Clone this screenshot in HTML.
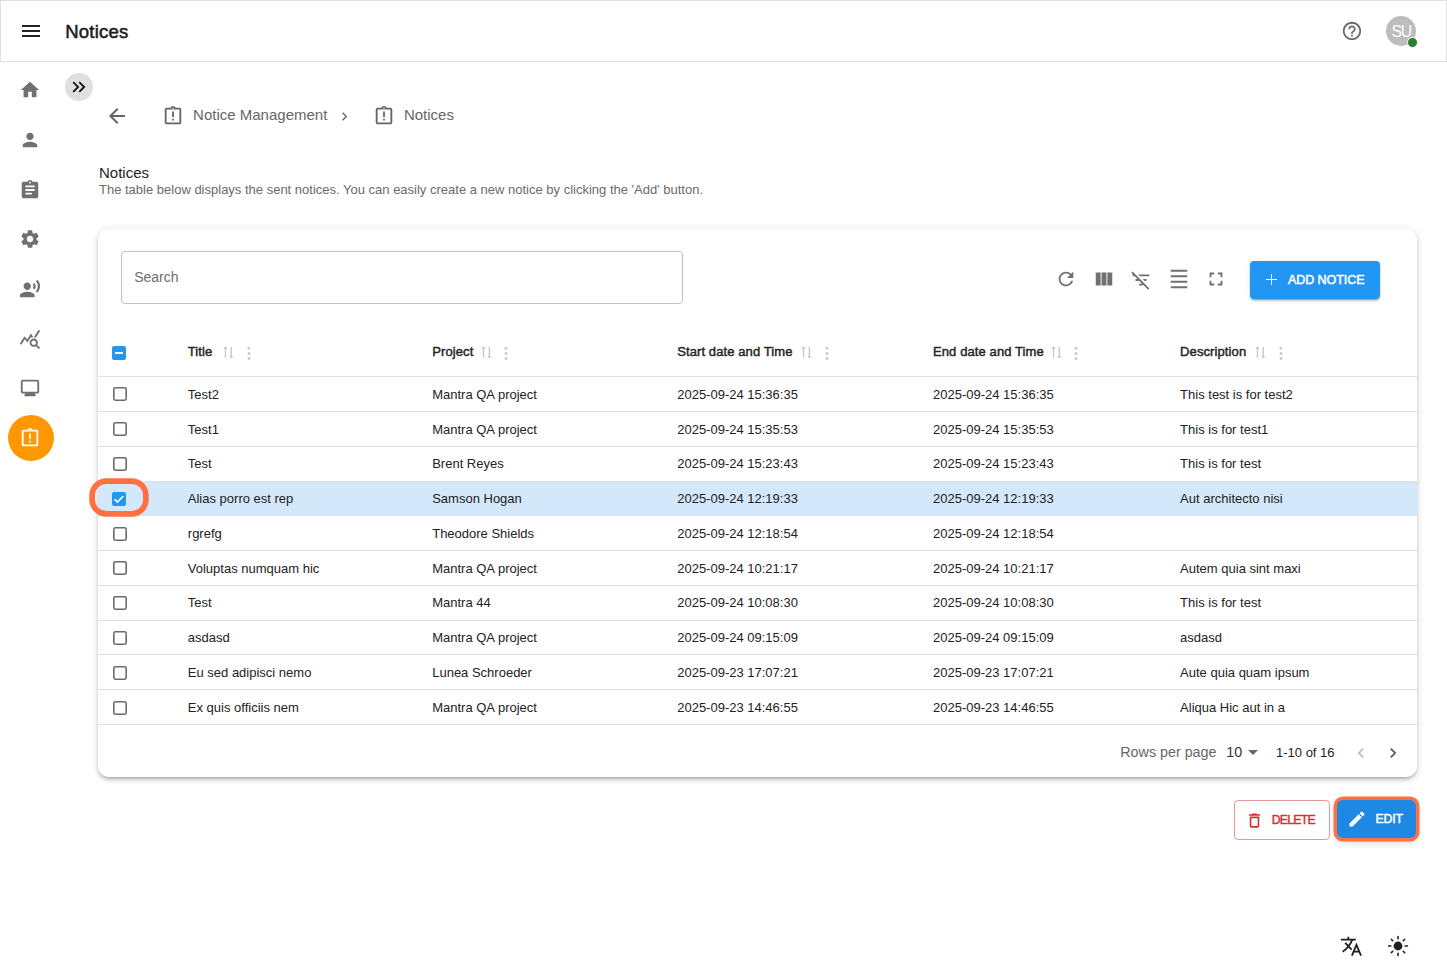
<!DOCTYPE html>
<html><head><meta charset="utf-8"><title>Notices</title>
<style>
html,body{margin:0;padding:0;background:#fff;width:1447px;height:970px;overflow:hidden;position:relative;font-family:"Liberation Sans", sans-serif}
.t{position:absolute;white-space:nowrap;line-height:1}
svg{display:block}
</style></head><body>
<div style="position:absolute;left:0.00px;top:0.00px;width:1447.00px;height:62.00px;box-sizing:border-box;border:1px solid #e0e0e0;background:#fff"></div>
<svg style="position:absolute;left:19.40px;top:19.05px;" width="24.00" height="24.00" viewBox="0 0 24 24"><path fill="#222" d="M3 18h18v-2H3zm0-5h18v-2H3zm0-7v2h18V6z"/></svg>
<div class="t" style="left:65.30px;top:22.74px;font-size:18.5px;font-weight:400;color:#1c1c1c;-webkit-text-stroke:0.55px #1c1c1c;letter-spacing:0.2px">Notices</div>
<svg style="position:absolute;left:1341.22px;top:20.22px;" width="21.96" height="21.96" viewBox="0 0 24 24"><path fill="#6a6a6a" d="M11 18h2v-2h-2zm1-16C6.48 2 2 6.48 2 12s4.48 10 10 10 10-4.48 10-10S17.52 2 12 2m0 18c-4.41 0-8-3.59-8-8s3.59-8 8-8 8 3.59 8 8-3.59 8-8 8m0-14c-2.21 0-4 1.79-4 4h2c0-1.1.9-2 2-2s2 .9 2 2c0 2-3 1.75-3 5h2c0-2.25 3-2.5 3-5 0-2.21-1.79-4-4-4"/></svg>
<div style="position:absolute;left:1386.00px;top:16.00px;width:30.00px;height:30.00px;border-radius:50%;background:#bdbdbd"></div>
<div class="t" style="left:1391.60px;top:24.03px;font-size:15.8px;font-weight:400;color:#fff;letter-spacing:-1.4px">SU</div>
<div style="position:absolute;left:1406.60px;top:36.70px;width:11.00px;height:11.00px;border-radius:50%;background:#2e7d32;box-sizing:border-box;border:1.5px solid #fff"></div>
<svg style="position:absolute;left:19.15px;top:79.21px;" width="22.00" height="22.00" viewBox="0 0 24 24"><path fill="#707070" d="M10 20v-6h4v6h5v-8h3L12 3 2 12h3v8z"/></svg>
<svg style="position:absolute;left:19.30px;top:129.25px;" width="22.00" height="22.00" viewBox="0 0 24 24"><path fill="#707070" d="M12 12c2.21 0 4-1.79 4-4s-1.79-4-4-4-4 1.79-4 4 1.79 4 4 4m0 2c-2.67 0-8 1.34-8 4v2h16v-2c0-2.66-5.33-4-8-4"/></svg>
<svg style="position:absolute;left:19.20px;top:179.17px;" width="22.00" height="22.00" viewBox="0 0 24 24"><path fill="#707070" d="M19 3h-4.18C14.4 1.84 13.3 1 12 1s-2.4.84-2.82 2H5c-1.1 0-2 .9-2 2v14c0 1.1.9 2 2 2h14c1.1 0 2-.9 2-2V5c0-1.1-.9-2-2-2m-7 0c.55 0 1 .45 1 1s-.45 1-1 1-1-.45-1-1 .45-1 1-1m2 14H7v-2h7zm3-4H7v-2h10zm0-4H7V7h10z"/></svg>
<svg style="position:absolute;left:19.30px;top:228.05px;" width="22.00" height="22.00" viewBox="0 0 24 24"><path fill="#707070" d="M19.14 12.94c.04-.3.06-.61.06-.94 0-.32-.02-.64-.07-.94l2.03-1.58c.18-.14.23-.41.12-.61l-1.92-3.32c-.12-.22-.37-.29-.59-.22l-2.39.96c-.5-.38-1.03-.7-1.62-.94l-.36-2.54c-.04-.24-.24-.41-.48-.41h-3.84c-.24 0-.43.17-.47.41l-.36 2.54c-.59.24-1.13.57-1.62.94l-2.39-.96c-.22-.08-.47 0-.59.22L2.74 8.87c-.12.21-.08.47.12.61l2.03 1.58c-.05.3-.09.63-.09.94s.02.64.07.94l-2.03 1.58c-.18.14-.23.41-.12.61l1.92 3.32c.12.22.37.29.59.22l2.39-.96c.5.38 1.03.7 1.62.94l.36 2.54c.05.24.24.41.48.41h3.84c.24 0 .44-.17.47-.41l.36-2.54c.59-.24 1.13-.56 1.62-.94l2.39.96c.22.08.47 0 .59-.22l1.92-3.32c.12-.22.07-.47-.12-.61zM12 15.6c-1.98 0-3.6-1.62-3.6-3.6s1.62-3.6 3.6-3.6 3.6 1.62 3.6 3.6-1.62 3.6-3.6 3.6"/></svg>
<svg style="position:absolute;left:19.25px;top:278.46px;" width="22.00" height="22.00" viewBox="0 0 24 24"><path fill="#707070" d="M9 13c2.21 0 4-1.79 4-4s-1.79-4-4-4-4 1.79-4 4 1.79 4 4 4m0 2c-2.67 0-8 1.34-8 4v2h16v-2c0-2.66-5.33-4-8-4m6.08-7.95c.84 1.18.84 2.71 0 3.89l1.68 1.69c2.02-2.02 2.02-5.07 0-7.27zM20.07 2l-1.63 1.63c2.77 3.02 2.77 7.56 0 10.74L20.07 16c3.9-3.89 3.91-9.95 0-14"/></svg>
<svg style="position:absolute;left:19.30px;top:328.04px;" width="22.00" height="22.00" viewBox="0 0 24 24"><path fill="#707070" d="M19.88 18.47c.44-.7.7-1.51.7-2.39 0-2.49-2.01-4.5-4.5-4.5s-4.5 2.01-4.5 4.5 2.01 4.5 4.49 4.5c.88 0 1.7-.26 2.39-.7L21.58 23 23 21.58zm-3.8.11c-1.38 0-2.5-1.12-2.5-2.5s1.12-2.5 2.5-2.5 2.5 1.12 2.5 2.5-1.12 2.5-2.5 2.5m-.36-8.5c-.74.02-1.45.18-2.1.45l-.55-.83-3.8 6.18-3.01-3.52-3.63 5.81L1 17l5-8 3 3.5L13 6zm2.59.5c-.64-.28-1.33-.45-2.05-.49L21.38 2 23 3.18z"/></svg>
<svg style="position:absolute;left:19.28px;top:377.15px;" width="22.00" height="22.00" viewBox="0 0 24 24"><path fill="#707070" d="M20 3H4c-1.1 0-2 .9-2 2v11c0 1.1.9 2 2 2h3l-1 1v2h12v-2l-1-1h3c1.1 0 2-.9 2-2V5c0-1.1-.9-2-2-2m0 13H4V5h16z"/></svg>
<div style="position:absolute;left:7.70px;top:414.80px;width:46.00px;height:46.00px;border-radius:50%;background:#ff9800"></div>
<svg style="position:absolute;left:19.40px;top:427.27px;" width="22.00" height="22.00" viewBox="0 0 24 24"><path fill="#fff" d="M11 15h2v2h-2zm0-8h2v6h-2zm8-4h-4.18C14.4 1.84 13.3 1 12 1s-2.4.84-2.82 2H5c-1.1 0-2 .9-2 2v14c0 1.1.9 2 2 2h14c1.1 0 2-.9 2-2V5c0-1.1-.9-2-2-2m-7-.25c.41 0 .75.34.75.75s-.34.75-.75.75-.75-.34-.75-.75.34-.75.75-.75M19 19H5V5h14z"/></svg>
<div style="position:absolute;left:65.20px;top:73.10px;width:27.70px;height:27.80px;border-radius:50%;background:#e0e0e0"></div>
<svg style="position:absolute;left:67.70px;top:75.50px;" width="22.00" height="22.00" viewBox="0 0 24 24"><path fill="#111" d="M6.41 6 5 7.41 9.58 12 5 16.59 6.41 18l6-6zM13 6l-1.41 1.41L16.17 12l-4.58 4.59L13 18l6-6z"/></svg>
<svg style="position:absolute;left:105.40px;top:104.30px;" width="24.00" height="24.00" viewBox="0 0 24 24"><path fill="#666" d="M20 11H7.83l5.59-5.59L12 4l-8 8 8 8 1.41-1.41L7.83 13H20z"/></svg>
<svg style="position:absolute;left:162.00px;top:105.12px;" width="22.00" height="22.00" viewBox="0 0 24 24"><path fill="#666" d="M11 15h2v2h-2zm0-8h2v6h-2zm8-4h-4.18C14.4 1.84 13.3 1 12 1s-2.4.84-2.82 2H5c-1.1 0-2 .9-2 2v14c0 1.1.9 2 2 2h14c1.1 0 2-.9 2-2V5c0-1.1-.9-2-2-2m-7-.25c.41 0 .75.34.75.75s-.34.75-.75.75-.75-.34-.75-.75.34-.75.75-.75M19 19H5V5h14z"/></svg>
<div class="t" style="left:193.10px;top:107.30px;font-size:15px;font-weight:400;color:#666;">Notice Management</div>
<svg style="position:absolute;left:336.49px;top:107.80px;" width="17.00" height="17.00" viewBox="0 0 24 24"><path fill="#666" d="M10 6 8.59 7.41 13.17 12l-4.58 4.59L10 18l6-6z"/></svg>
<svg style="position:absolute;left:373.20px;top:105.12px;" width="22.00" height="22.00" viewBox="0 0 24 24"><path fill="#666" d="M11 15h2v2h-2zm0-8h2v6h-2zm8-4h-4.18C14.4 1.84 13.3 1 12 1s-2.4.84-2.82 2H5c-1.1 0-2 .9-2 2v14c0 1.1.9 2 2 2h14c1.1 0 2-.9 2-2V5c0-1.1-.9-2-2-2m-7-.25c.41 0 .75.34.75.75s-.34.75-.75.75-.75-.34-.75-.75.34-.75.75-.75M19 19H5V5h14z"/></svg>
<div class="t" style="left:403.90px;top:107.30px;font-size:15px;font-weight:400;color:#666;">Notices</div>
<div class="t" style="left:99.00px;top:164.70px;font-size:15px;font-weight:400;color:#1f1f1f;">Notices</div>
<div class="t" style="left:99.00px;top:182.90px;font-size:13px;font-weight:400;color:#6b6b6b;">The table below displays the sent notices. You can easily create a new notice by clicking the 'Add' button.</div>
<div style="position:absolute;left:97.70px;top:228.60px;width:1319.50px;height:548.30px;border-radius:11px;background:#fff;box-shadow:0px 3px 3px -2px rgba(0,0,0,0.2),0px 3px 4px 0px rgba(0,0,0,0.14),0px 1px 8px 0px rgba(0,0,0,0.12)"></div>
<div style="position:absolute;left:121.30px;top:251.30px;width:561.70px;height:52.30px;box-sizing:border-box;border:1px solid #c2c2c2;border-radius:4px"></div>
<div class="t" style="left:134.20px;top:270.15px;font-size:14px;font-weight:400;color:#6e6e6e;">Search</div>
<svg style="position:absolute;left:1055.30px;top:268.00px;" width="22.00" height="22.00" viewBox="0 0 24 24"><path fill="#717171" d="M17.65 6.35C16.2 4.9 14.21 4 12 4c-4.42 0-7.99 3.58-7.99 8s3.57 8 7.99 8c3.73 0 6.84-2.55 7.73-6h-2.08c-.82 2.33-3.04 4-5.65 4-3.31 0-6-2.69-6-6s2.69-6 6-6c1.66 0 3.14.69 4.22 1.78L13 11h7V4z"/></svg>
<svg style="position:absolute;left:1093.25px;top:268.25px;" width="22.00" height="22.00" viewBox="0 0 24 24"><path fill="#717171" d="M14.67 5v14H9.33V5zm1 14H21V5h-5.33zm-7.34 0V5H3v14z"/></svg>
<svg style="position:absolute;left:1130.36px;top:268.70px;" width="22.00" height="22.00" viewBox="0 0 24 24"><path fill="#717171" d="M10.83 8H21V6H8.83zm5 5H18v-2h-4.17zM14 16.83V18h-4v-2h3.17l-3-3H6v-2h2.17l-3-3H3V6h.17L1.39 4.22 2.8 2.81l18.38 18.38-1.41 1.41z"/></svg>
<svg style="position:absolute;left:1168.25px;top:268.35px;" width="22.00" height="22.00" viewBox="0 0 24 24"><path fill="#717171" d="M3 2h18v2H3zm0 18h18v2H3zm0-6h18v2H3zm0-6h18v2H3z"/></svg>
<svg style="position:absolute;left:1205.40px;top:268.05px;" width="22.00" height="22.00" viewBox="0 0 24 24"><path fill="#717171" d="M7 14H5v5h5v-2H7zm-2-4h2V7h3V5H5zm12 7h-3v2h5v-5h-2zM14 5v2h3v3h2V5z"/></svg>
<div style="position:absolute;left:1250.10px;top:261.20px;width:129.70px;height:37.60px;border-radius:4px;background:#2196f3;box-shadow:0 3px 1px -2px rgba(0,0,0,0.2),0 2px 2px 0 rgba(0,0,0,0.14),0 1px 5px 0 rgba(0,0,0,0.12)"></div>
<div style="position:absolute;left:1265.80px;top:278.80px;width:11.20px;height:1.60px;background:#fff"></div>
<div style="position:absolute;left:1270.60px;top:274.00px;width:1.60px;height:11.20px;background:#fff"></div>
<div class="t" style="left:1287.90px;top:273.82px;font-size:12.5px;font-weight:400;color:#fff;-webkit-text-stroke:0.5px #fff;letter-spacing:-0.05px">ADD NOTICE</div>
<div style="position:absolute;left:112.20px;top:346.10px;width:14.10px;height:14.10px;border-radius:2px;background:#2196f3"></div>
<div style="position:absolute;left:115.30px;top:352.30px;width:8.00px;height:2.00px;background:#fff"></div>
<div class="t" style="left:187.80px;top:345.10px;font-size:13px;font-weight:400;color:#262626;-webkit-text-stroke:0.45px #262626;letter-spacing:0.1px">Title</div>
<svg style="position:absolute;left:221.80px;top:345px" width="13" height="15" viewBox="0 0 13 15"><g fill="#cacaca"><rect x="2.8" y="2.6" width="1.4" height="10.1"/><path d="M1.2 4.0L3.5 1.3 5.8 4.0z"/><rect x="8.6" y="2.0" width="1.4" height="10.3"/><path d="M7 11.1L9.3 13.6 11.6 11.1z"/></g></svg>
<svg style="position:absolute;left:246.20px;top:345px" width="6" height="16" viewBox="0 0 6 16"><g fill="#cccccc"><circle cx="3" cy="3.2" r="1.5"/><circle cx="3" cy="8.4" r="1.5"/><circle cx="3" cy="13.4" r="1.5"/></g></svg>
<div class="t" style="left:432.20px;top:345.10px;font-size:13px;font-weight:400;color:#262626;-webkit-text-stroke:0.45px #262626;letter-spacing:0.1px">Project</div>
<svg style="position:absolute;left:479.90px;top:345px" width="13" height="15" viewBox="0 0 13 15"><g fill="#cacaca"><rect x="2.8" y="2.6" width="1.4" height="10.1"/><path d="M1.2 4.0L3.5 1.3 5.8 4.0z"/><rect x="8.6" y="2.0" width="1.4" height="10.3"/><path d="M7 11.1L9.3 13.6 11.6 11.1z"/></g></svg>
<svg style="position:absolute;left:503.00px;top:345px" width="6" height="16" viewBox="0 0 6 16"><g fill="#cccccc"><circle cx="3" cy="3.2" r="1.5"/><circle cx="3" cy="8.4" r="1.5"/><circle cx="3" cy="13.4" r="1.5"/></g></svg>
<div class="t" style="left:677.20px;top:345.10px;font-size:13px;font-weight:400;color:#262626;-webkit-text-stroke:0.45px #262626;letter-spacing:0.1px">Start date and Time</div>
<svg style="position:absolute;left:800.30px;top:345px" width="13" height="15" viewBox="0 0 13 15"><g fill="#cacaca"><rect x="2.8" y="2.6" width="1.4" height="10.1"/><path d="M1.2 4.0L3.5 1.3 5.8 4.0z"/><rect x="8.6" y="2.0" width="1.4" height="10.3"/><path d="M7 11.1L9.3 13.6 11.6 11.1z"/></g></svg>
<svg style="position:absolute;left:824.00px;top:345px" width="6" height="16" viewBox="0 0 6 16"><g fill="#cccccc"><circle cx="3" cy="3.2" r="1.5"/><circle cx="3" cy="8.4" r="1.5"/><circle cx="3" cy="13.4" r="1.5"/></g></svg>
<div class="t" style="left:933.00px;top:345.10px;font-size:13px;font-weight:400;color:#262626;-webkit-text-stroke:0.45px #262626;letter-spacing:0.1px">End date and Time</div>
<svg style="position:absolute;left:1049.80px;top:345px" width="13" height="15" viewBox="0 0 13 15"><g fill="#cacaca"><rect x="2.8" y="2.6" width="1.4" height="10.1"/><path d="M1.2 4.0L3.5 1.3 5.8 4.0z"/><rect x="8.6" y="2.0" width="1.4" height="10.3"/><path d="M7 11.1L9.3 13.6 11.6 11.1z"/></g></svg>
<svg style="position:absolute;left:1073.20px;top:345px" width="6" height="16" viewBox="0 0 6 16"><g fill="#cccccc"><circle cx="3" cy="3.2" r="1.5"/><circle cx="3" cy="8.4" r="1.5"/><circle cx="3" cy="13.4" r="1.5"/></g></svg>
<div class="t" style="left:1180.10px;top:345.10px;font-size:13px;font-weight:400;color:#262626;-webkit-text-stroke:0.45px #262626;letter-spacing:0.1px">Description</div>
<svg style="position:absolute;left:1254.10px;top:345px" width="13" height="15" viewBox="0 0 13 15"><g fill="#cacaca"><rect x="2.8" y="2.6" width="1.4" height="10.1"/><path d="M1.2 4.0L3.5 1.3 5.8 4.0z"/><rect x="8.6" y="2.0" width="1.4" height="10.3"/><path d="M7 11.1L9.3 13.6 11.6 11.1z"/></g></svg>
<svg style="position:absolute;left:1277.90px;top:345px" width="6" height="16" viewBox="0 0 6 16"><g fill="#cccccc"><circle cx="3" cy="3.2" r="1.5"/><circle cx="3" cy="8.4" r="1.5"/><circle cx="3" cy="13.4" r="1.5"/></g></svg>
<div style="position:absolute;left:97.70px;top:376.00px;width:1319.50px;height:1.00px;background:#e0e0e0"></div>
<div style="position:absolute;left:97.70px;top:411.00px;width:1319.50px;height:1.00px;background:#e0e0e0"></div>
<svg style="position:absolute;left:111.5px;top:386.30px" width="16" height="16" viewBox="0 0 16 16"><rect x="1.8" y="1.8" width="12.4" height="12.4" rx="1.6" fill="none" stroke="#6b6b6b" stroke-width="1.6"/></svg>
<div class="t" style="left:187.80px;top:388.10px;font-size:13px;font-weight:400;color:#222;">Test2</div>
<div class="t" style="left:432.20px;top:388.10px;font-size:13px;font-weight:400;color:#222;">Mantra QA project</div>
<div class="t" style="left:677.20px;top:388.10px;font-size:13px;font-weight:400;color:#222;">2025-09-24 15:36:35</div>
<div class="t" style="left:933.00px;top:388.10px;font-size:13px;font-weight:400;color:#222;">2025-09-24 15:36:35</div>
<div class="t" style="left:1180.10px;top:388.10px;font-size:13px;font-weight:400;color:#222;">This test is for test2</div>
<div style="position:absolute;left:97.70px;top:446.00px;width:1319.50px;height:1.00px;background:#e0e0e0"></div>
<svg style="position:absolute;left:111.5px;top:421.10px" width="16" height="16" viewBox="0 0 16 16"><rect x="1.8" y="1.8" width="12.4" height="12.4" rx="1.6" fill="none" stroke="#6b6b6b" stroke-width="1.6"/></svg>
<div class="t" style="left:187.80px;top:423.10px;font-size:13px;font-weight:400;color:#222;">Test1</div>
<div class="t" style="left:432.20px;top:423.10px;font-size:13px;font-weight:400;color:#222;">Mantra QA project</div>
<div class="t" style="left:677.20px;top:423.10px;font-size:13px;font-weight:400;color:#222;">2025-09-24 15:35:53</div>
<div class="t" style="left:933.00px;top:423.10px;font-size:13px;font-weight:400;color:#222;">2025-09-24 15:35:53</div>
<div class="t" style="left:1180.10px;top:423.10px;font-size:13px;font-weight:400;color:#222;">This is for test1</div>
<div style="position:absolute;left:97.70px;top:481.00px;width:1319.50px;height:1.00px;background:#e0e0e0"></div>
<svg style="position:absolute;left:111.5px;top:455.90px" width="16" height="16" viewBox="0 0 16 16"><rect x="1.8" y="1.8" width="12.4" height="12.4" rx="1.6" fill="none" stroke="#6b6b6b" stroke-width="1.6"/></svg>
<div class="t" style="left:187.80px;top:457.10px;font-size:13px;font-weight:400;color:#222;">Test</div>
<div class="t" style="left:432.20px;top:457.10px;font-size:13px;font-weight:400;color:#222;">Brent Reyes</div>
<div class="t" style="left:677.20px;top:457.10px;font-size:13px;font-weight:400;color:#222;">2025-09-24 15:23:43</div>
<div class="t" style="left:933.00px;top:457.10px;font-size:13px;font-weight:400;color:#222;">2025-09-24 15:23:43</div>
<div class="t" style="left:1180.10px;top:457.10px;font-size:13px;font-weight:400;color:#222;">This is for test</div>
<div style="position:absolute;left:97.70px;top:482.00px;width:1319.50px;height:33.00px;background:#d3e8fb"></div>
<div style="position:absolute;left:97.70px;top:515.00px;width:1319.50px;height:1.00px;background:#e0e0e0"></div>
<div style="position:absolute;left:112.20px;top:491.70px;width:14.00px;height:14.00px;border-radius:2px;background:#2196f3"></div>
<svg style="position:absolute;left:112.2px;top:491.70px" width="14" height="14" viewBox="0 0 14 14"><path fill="none" stroke="#fff" stroke-width="1.6" d="M2.6 7.2l2.9 2.8 5.8-6"/></svg>
<div class="t" style="left:187.80px;top:492.10px;font-size:13px;font-weight:400;color:#222;">Alias porro est rep</div>
<div class="t" style="left:432.20px;top:492.10px;font-size:13px;font-weight:400;color:#222;">Samson Hogan</div>
<div class="t" style="left:677.20px;top:492.10px;font-size:13px;font-weight:400;color:#222;">2025-09-24 12:19:33</div>
<div class="t" style="left:933.00px;top:492.10px;font-size:13px;font-weight:400;color:#222;">2025-09-24 12:19:33</div>
<div class="t" style="left:1180.10px;top:492.10px;font-size:13px;font-weight:400;color:#222;">Aut architecto nisi</div>
<div style="position:absolute;left:97.70px;top:550.00px;width:1319.50px;height:1.00px;background:#e0e0e0"></div>
<svg style="position:absolute;left:111.5px;top:525.50px" width="16" height="16" viewBox="0 0 16 16"><rect x="1.8" y="1.8" width="12.4" height="12.4" rx="1.6" fill="none" stroke="#6b6b6b" stroke-width="1.6"/></svg>
<div class="t" style="left:187.80px;top:527.10px;font-size:13px;font-weight:400;color:#222;">rgrefg</div>
<div class="t" style="left:432.20px;top:527.10px;font-size:13px;font-weight:400;color:#222;">Theodore Shields</div>
<div class="t" style="left:677.20px;top:527.10px;font-size:13px;font-weight:400;color:#222;">2025-09-24 12:18:54</div>
<div class="t" style="left:933.00px;top:527.10px;font-size:13px;font-weight:400;color:#222;">2025-09-24 12:18:54</div>
<div class="t" style="left:1180.10px;top:527.10px;font-size:13px;font-weight:400;color:#222;"></div>
<div style="position:absolute;left:97.70px;top:585.00px;width:1319.50px;height:1.00px;background:#e0e0e0"></div>
<svg style="position:absolute;left:111.5px;top:560.30px" width="16" height="16" viewBox="0 0 16 16"><rect x="1.8" y="1.8" width="12.4" height="12.4" rx="1.6" fill="none" stroke="#6b6b6b" stroke-width="1.6"/></svg>
<div class="t" style="left:187.80px;top:562.10px;font-size:13px;font-weight:400;color:#222;">Voluptas numquam hic</div>
<div class="t" style="left:432.20px;top:562.10px;font-size:13px;font-weight:400;color:#222;">Mantra QA project</div>
<div class="t" style="left:677.20px;top:562.10px;font-size:13px;font-weight:400;color:#222;">2025-09-24 10:21:17</div>
<div class="t" style="left:933.00px;top:562.10px;font-size:13px;font-weight:400;color:#222;">2025-09-24 10:21:17</div>
<div class="t" style="left:1180.10px;top:562.10px;font-size:13px;font-weight:400;color:#222;">Autem quia sint maxi</div>
<div style="position:absolute;left:97.70px;top:620.00px;width:1319.50px;height:1.00px;background:#e0e0e0"></div>
<svg style="position:absolute;left:111.5px;top:595.10px" width="16" height="16" viewBox="0 0 16 16"><rect x="1.8" y="1.8" width="12.4" height="12.4" rx="1.6" fill="none" stroke="#6b6b6b" stroke-width="1.6"/></svg>
<div class="t" style="left:187.80px;top:596.10px;font-size:13px;font-weight:400;color:#222;">Test</div>
<div class="t" style="left:432.20px;top:596.10px;font-size:13px;font-weight:400;color:#222;">Mantra 44</div>
<div class="t" style="left:677.20px;top:596.10px;font-size:13px;font-weight:400;color:#222;">2025-09-24 10:08:30</div>
<div class="t" style="left:933.00px;top:596.10px;font-size:13px;font-weight:400;color:#222;">2025-09-24 10:08:30</div>
<div class="t" style="left:1180.10px;top:596.10px;font-size:13px;font-weight:400;color:#222;">This is for test</div>
<div style="position:absolute;left:97.70px;top:654.00px;width:1319.50px;height:1.00px;background:#e0e0e0"></div>
<svg style="position:absolute;left:111.5px;top:629.90px" width="16" height="16" viewBox="0 0 16 16"><rect x="1.8" y="1.8" width="12.4" height="12.4" rx="1.6" fill="none" stroke="#6b6b6b" stroke-width="1.6"/></svg>
<div class="t" style="left:187.80px;top:631.10px;font-size:13px;font-weight:400;color:#222;">asdasd</div>
<div class="t" style="left:432.20px;top:631.10px;font-size:13px;font-weight:400;color:#222;">Mantra QA project</div>
<div class="t" style="left:677.20px;top:631.10px;font-size:13px;font-weight:400;color:#222;">2025-09-24 09:15:09</div>
<div class="t" style="left:933.00px;top:631.10px;font-size:13px;font-weight:400;color:#222;">2025-09-24 09:15:09</div>
<div class="t" style="left:1180.10px;top:631.10px;font-size:13px;font-weight:400;color:#222;">asdasd</div>
<div style="position:absolute;left:97.70px;top:689.00px;width:1319.50px;height:1.00px;background:#e0e0e0"></div>
<svg style="position:absolute;left:111.5px;top:664.70px" width="16" height="16" viewBox="0 0 16 16"><rect x="1.8" y="1.8" width="12.4" height="12.4" rx="1.6" fill="none" stroke="#6b6b6b" stroke-width="1.6"/></svg>
<div class="t" style="left:187.80px;top:666.10px;font-size:13px;font-weight:400;color:#222;">Eu sed adipisci nemo</div>
<div class="t" style="left:432.20px;top:666.10px;font-size:13px;font-weight:400;color:#222;">Lunea Schroeder</div>
<div class="t" style="left:677.20px;top:666.10px;font-size:13px;font-weight:400;color:#222;">2025-09-23 17:07:21</div>
<div class="t" style="left:933.00px;top:666.10px;font-size:13px;font-weight:400;color:#222;">2025-09-23 17:07:21</div>
<div class="t" style="left:1180.10px;top:666.10px;font-size:13px;font-weight:400;color:#222;">Aute quia quam ipsum</div>
<div style="position:absolute;left:97.70px;top:724.00px;width:1319.50px;height:1.00px;background:#e0e0e0"></div>
<svg style="position:absolute;left:111.5px;top:699.50px" width="16" height="16" viewBox="0 0 16 16"><rect x="1.8" y="1.8" width="12.4" height="12.4" rx="1.6" fill="none" stroke="#6b6b6b" stroke-width="1.6"/></svg>
<div class="t" style="left:187.80px;top:701.10px;font-size:13px;font-weight:400;color:#222;">Ex quis officiis nem</div>
<div class="t" style="left:432.20px;top:701.10px;font-size:13px;font-weight:400;color:#222;">Mantra QA project</div>
<div class="t" style="left:677.20px;top:701.10px;font-size:13px;font-weight:400;color:#222;">2025-09-23 14:46:55</div>
<div class="t" style="left:933.00px;top:701.10px;font-size:13px;font-weight:400;color:#222;">2025-09-23 14:46:55</div>
<div class="t" style="left:1180.10px;top:701.10px;font-size:13px;font-weight:400;color:#222;">Aliqua Hic aut in a</div>
<div style="position:absolute;left:95.20px;top:483.60px;width:47.80px;height:27.10px;border-radius:11.5px;box-shadow:0 0 0 5.8px #ff7043"></div>
<div class="t" style="left:1120.30px;top:744.70px;font-size:14.3px;font-weight:400;color:#666;">Rows per page</div>
<div class="t" style="left:1226.30px;top:744.70px;font-size:14.3px;font-weight:400;color:#333;">10</div>
<svg style="position:absolute;left:1240.55px;top:740.00px;" width="24.00" height="24.00" viewBox="0 0 24 24"><path fill="#666" d="m7 10 5 5 5-5z"/></svg>
<div class="t" style="left:1276.00px;top:745.80px;font-size:13px;font-weight:400;color:#222;">1-10 of 16</div>
<svg style="position:absolute;left:1351.40px;top:742.50px;" width="20.00" height="20.00" viewBox="0 0 24 24"><path fill="#bdbdbd" d="M15.41 7.41 14 6l-6 6 6 6 1.41-1.41L10.83 12z"/></svg>
<svg style="position:absolute;left:1383.30px;top:742.50px;" width="20.00" height="20.00" viewBox="0 0 24 24"><path fill="#555" d="M10 6 8.59 7.41 13.17 12l-4.58 4.59L10 18l6-6z"/></svg>
<div style="position:absolute;left:1234.20px;top:800.20px;width:95.60px;height:39.40px;box-sizing:border-box;border:1px solid rgba(211,47,47,0.5);border-radius:4px"></div>
<svg style="position:absolute;left:1244.75px;top:810.80px;" width="19.00" height="19.00" viewBox="0 0 24 24"><path fill="#d32f2f" d="M6 19c0 1.1.9 2 2 2h8c1.1 0 2-.9 2-2V7H6zM8 9h8v10H8zm7.5-5-1-1h-5l-1 1H5v2h14V4z"/></svg>
<div class="t" style="left:1271.70px;top:813.99px;font-size:12.3px;font-weight:400;color:#d32f2f;-webkit-text-stroke:0.4px #d32f2f;letter-spacing:-0.75px">DELETE</div>
<div style="position:absolute;left:1336.90px;top:799.90px;width:79.30px;height:38.30px;border-radius:6px;background:#1e88e5;box-shadow:0 0 0 3.5px #ff7043, 0 3px 8px rgba(0,0,0,0.25)"></div>
<svg style="position:absolute;left:1347.10px;top:809.40px;" width="20.00" height="20.00" viewBox="0 0 24 24"><path fill="#fff" d="M3 17.25V21h3.75L17.81 9.94l-3.75-3.75zM20.71 7.04c.39-.39.39-1.02 0-1.41l-2.34-2.34a.996.996 0 0 0-1.41 0l-1.83 1.83 3.75 3.75z"/></svg>
<div class="t" style="left:1375.40px;top:813.19px;font-size:12.3px;font-weight:400;color:#fff;-webkit-text-stroke:0.45px #fff;letter-spacing:-0.1px">EDIT</div>
<svg style="position:absolute;left:1338px;top:934px" width="26" height="24" viewBox="0 0 26 24"><g fill="none" stroke="#1f1f1f" stroke-width="1.8" stroke-linecap="butt" stroke-linejoin="miter"><path d="M2.9 5.6h14.9M10.35 2.8v2.8M14.2 6.2Q11 13.5 4.6 17.8M7.2 8.8l6.4 6.9M13.9 21.6L18.45 10.9 23 21.6M15.6 17.6h5.8"/></g></svg>
<svg style="position:absolute;left:1386.3px;top:934.3px" width="24" height="24" viewBox="0 0 24 24"><circle cx="12" cy="12" r="4.4" fill="#1f1f1f"/><g stroke="#1f1f1f" stroke-width="1.6" stroke-linecap="round"><path d="M12 2.6v2.2M12 19.2v2.2M2.6 12h2.2M19.2 12h2.2M5.4 5.4l1.3 1.3M17.3 17.3l1.3 1.3M5.4 18.6l1.3-1.3M17.3 6.7l1.3-1.3"/></g></svg>
</body></html>
